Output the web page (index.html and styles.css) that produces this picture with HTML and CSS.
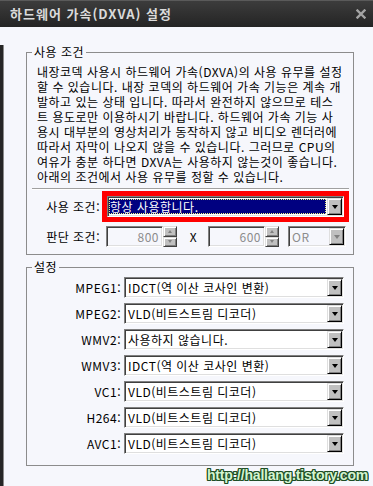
FILE: index.html
```html
<!DOCTYPE html>
<html lang="ko">
<head>
  <meta charset="UTF-8">
  <title>하드웨어 가속(DXVA) 설정</title>
  <link rel="stylesheet" href="styles.css">
</head>
<body>
  <div class="window">
    <div class="titlebar">
      <span class="title">하드웨어 가속(DXVA) 설정</span>
      <svg class="close" width="10" height="10" viewBox="0 0 10 10">
        <path d="M1.5 1.5 L8.5 8.5 M8.5 1.5 L1.5 8.5" stroke="#a4a4a4" stroke-width="2.4" stroke-linecap="square"/>
      </svg>
    </div>

    <div class="client">
      <fieldset class="group">
        <legend>사용 조건</legend>
        <div class="group-body cond-body">
          <p class="desc">내장코덱 사용시 하드웨어 가속(DXVA)의 사용 유무를 설정<br>할 수 있습니다. 내장 코덱의 하드웨어 가속 기능은 계속 개<br>발하고 있는 상태 입니다. 따라서 완전하지 않으므로 테스<br>트 용도로만 이용하시기 바랍니다. 하드웨어 가속 기능 사<br>용시 대부분의 영상처리가 동작하지 않고 비디오 렌더러에<br>따라서 자막이 나오지 않을 수 있습니다. 그러므로 CPU의<br>여유가 충분 하다면 DXVA는 사용하지 않는것이 좋습니다.<br>아래의 조건에서 사용 유무를 정할 수 있습니다.</p>
          <div class="sep"></div>

          <div class="cond-row first">
            <span class="label">사용 조건:</span>
            <div class="combo flagged">
              <span class="combo-text selected">항상 사용합니다.</span>
              <span class="combo-btn"><i class="arrow"></i></span>
            </div>
          </div>

          <div class="cond-row second">
            <span class="label">판단 조건:</span>
            <div class="spin">
              <span class="edit disabled">800</span>
              <span class="spin-btns">
                <span class="spin-btn"><i class="tri-up"></i></span>
                <span class="spin-btn"><i class="tri-down"></i></span>
              </span>
            </div>
            <span class="times">X</span>
            <div class="spin">
              <span class="edit disabled">600</span>
              <span class="spin-btns">
                <span class="spin-btn"><i class="tri-up"></i></span>
                <span class="spin-btn"><i class="tri-down"></i></span>
              </span>
            </div>
            <div class="combo small disabled">
              <span class="combo-text">OR</span>
              <span class="combo-btn"><i class="arrow"></i></span>
            </div>
          </div>
        </div>
      </fieldset>

      <fieldset class="group settings">
        <legend>설정</legend>
        <div class="settings-grid">
          <span class="label">MPEG1:</span>
          <div class="combo"><span class="combo-text">IDCT(역 이산 코사인 변환)</span><span class="combo-btn"><i class="arrow"></i></span></div>
          <span class="label">MPEG2:</span>
          <div class="combo"><span class="combo-text">VLD(비트스트림 디코더)</span><span class="combo-btn"><i class="arrow"></i></span></div>
          <span class="label">WMV2:</span>
          <div class="combo"><span class="combo-text">사용하지 않습니다.</span><span class="combo-btn"><i class="arrow"></i></span></div>
          <span class="label">WMV3:</span>
          <div class="combo"><span class="combo-text">IDCT(역 이산 코사인 변환)</span><span class="combo-btn"><i class="arrow"></i></span></div>
          <span class="label">VC1:</span>
          <div class="combo"><span class="combo-text">VLD(비트스트림 디코더)</span><span class="combo-btn"><i class="arrow"></i></span></div>
          <span class="label">H264:</span>
          <div class="combo"><span class="combo-text">VLD(비트스트림 디코더)</span><span class="combo-btn"><i class="arrow"></i></span></div>
          <span class="label">AVC1:</span>
          <div class="combo"><span class="combo-text">VLD(비트스트림 디코더)</span><span class="combo-btn"><i class="arrow"></i></span></div>
        </div>
      </fieldset>

      <div class="watermark">http://hallang.tistory.com</div>
    </div>
  </div>
</body>
</html>
```

FILE: styles.css
```css
body {
  margin: 0;
  background: #f6f7fc;
  color: #000;
  font-family: "Noto Sans CJK KR", "Liberation Sans", sans-serif;
  font-size: 12px;
  letter-spacing: 0.5px;
}

.window {
  width: 373px;
  height: 486px;
  overflow: hidden;
}

/* title bar */
.titlebar {
  height: 27px;
  box-sizing: border-box;
  border-top: 1px solid #5a5a5a;
  background: linear-gradient(#3c3c3c, #242424);
  display: flex;
  align-items: center;
  justify-content: space-between;
  padding: 0 7px 0 10px;
}

.title {
  color: #dadada;
  font-weight: bold;
  font-size: 13px;
  line-height: 16px;
  letter-spacing: 1px;
}

.close {
  display: block;
}

/* client area */
.client {
  height: 459px;
  box-sizing: border-box;
  border-left: 3px solid #262626;
  box-shadow: inset 1px 0 #8a8a8a;
  padding: 0 19px 0 23px;
}

.group {
  margin: 18px 0 0;
  padding: 0;
  border: 1px solid #8c8c8c;
  min-width: 0;
}

.group legend {
  margin-left: 5px;
  padding: 0 2px;
  line-height: 14px;
}

.group-body {
  padding: 5px 4px 7px 5px;
}

.desc {
  margin: 0;
  padding-left: 5px;
  line-height: 15px;
  white-space: nowrap;
}

.sep {
  margin-top: 4px;
  border-top: 1px solid #a0a0a0;
  border-bottom: 1px solid #fff;
}

.cond-row {
  display: flex;
  align-items: center;
  height: 21px;
}

.cond-row.first {
  margin-top: 6px;
  gap: 7px;
}

.cond-row.second {
  margin-top: 9px;
  gap: 6px;
}

.cond-row .label {
  width: 68px;
  text-align: right;
  white-space: nowrap;
}

/* combo box */
.combo {
  height: 21px;
  box-sizing: border-box;
  display: flex;
  align-items: stretch;
  background: #fff;
  border: 1px solid;
  border-color: #808080 #fff #fff #808080;
  box-shadow: inset 1px 1px #404040, inset -1px -1px #dfdfdf;
  padding: 1px;
}

.combo.flagged {
  width: 237px;
  outline: 5px solid #f00;
}

.combo-text {
  flex: 1;
  padding-left: 2px;
  line-height: 17px;
  white-space: nowrap;
  overflow: hidden;
}

.combo-text.selected {
  margin: 1px 1px 1px 0;
  background: #000080;
  color: #fff;
  outline: 1px dotted #f0f080;
  outline-offset: -1px;
  line-height: 15px;
  padding-left: 1px;
}

.combo-btn {
  width: 15px;
  box-sizing: border-box;
  background: #c0c0c0;
  border: 1px solid;
  border-color: #dfdfdf #000 #000 #dfdfdf;
  box-shadow: inset 1px 1px #fff, inset -1px -1px #808080;
  display: flex;
  align-items: center;
  justify-content: center;
}

.arrow {
  width: 0;
  height: 0;
  border-left: 3.5px solid transparent;
  border-right: 3.5px solid transparent;
  border-top: 4px solid #000;
}

.combo.disabled {
  background: #f6f7fc;
  color: #8c8c8c;
}

.combo.disabled .arrow {
  border-top-color: #808080;
}

.combo.small {
  width: 58px;
  margin-left: 3px;
}

/* spin edits */
.spin {
  display: flex;
  height: 21px;
}

.edit {
  width: 57px;
  box-sizing: border-box;
  border: 1px solid;
  border-color: #808080 #fff #fff #808080;
  box-shadow: inset 1px 1px #404040, inset -1px -1px #dfdfdf;
  text-align: right;
  padding-right: 3px;
  line-height: 19px;
}

.edit.disabled {
  color: #8c8c8c;
  background: #f6f7fc;
}

.spin-btns {
  width: 14px;
  display: flex;
  flex-direction: column;
}

.spin-btn {
  flex: 1;
  box-sizing: border-box;
  background: #c0c0c0;
  border: 1px solid;
  border-color: #dfdfdf #404040 #404040 #dfdfdf;
  box-shadow: inset 1px 1px #fff, inset -1px -1px #808080;
  display: flex;
  align-items: center;
  justify-content: center;
}

.tri-up,
.tri-down {
  width: 0;
  height: 0;
  border-left: 2.5px solid transparent;
  border-right: 2.5px solid transparent;
}

.tri-up {
  border-bottom: 3px solid #808080;
}

.tri-down {
  border-top: 3px solid #808080;
}

.times {
  width: 17px;
  text-align: center;
  margin-left: 2px;
}

/* settings group */
.settings {
  margin-top: 5px;
}

.settings-grid {
  display: grid;
  grid-template-columns: 94px 220px;
  column-gap: 3px;
  row-gap: 5px;
  padding: 3px 0 11px;
  align-items: center;
}

.settings-grid .label {
  text-align: right;
  white-space: nowrap;
}

/* blog watermark */
.watermark {
  margin: 1px -14px 0 0;
  text-align: right;
  font-family: "Liberation Sans", sans-serif;
  font-weight: bold;
  font-size: 14px;
  line-height: 16px;
  letter-spacing: -0.2px;
  color: #d4f4d0;
  text-shadow: 1px 0 #1d4d25, -1px 0 #1d4d25, 0 1px #1d4d25, 0 -1px #1d4d25,
    1px 1px #1d4d25, -1px -1px #1d4d25, 1px -1px #1d4d25, -1px 1px #1d4d25;
}
```
